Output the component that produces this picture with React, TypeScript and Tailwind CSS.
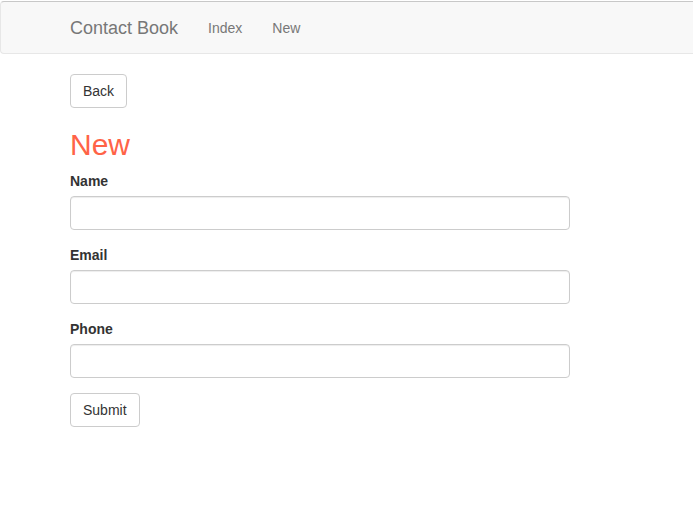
export default function App() {
  const fields = ["Name", "Email", "Phone"];
  return (
    <div className="min-h-[505px] overflow-hidden bg-white text-[14px] leading-[20px] text-[#333] [font-family:'Liberation_Sans',Arial,sans-serif]">
      <div className="h-px bg-white" />
      <nav className="mb-5 flex h-[53px] rounded-l-[4px] border border-r-0 border-[#e7e7e7] border-t-[#c8c8c8] bg-[#f8f8f8]">
        <div className="flex items-center pl-[54px]">
          <a className="px-[15px] text-[18px] leading-[20px] text-[#777]">Contact Book</a>
          <a className="px-[15px] text-[#777]">Index</a>
          <a className="px-[15px] text-[#777]">New</a>
        </div>
      </nav>
      <div className="px-[70px]">
        <button className="h-[34px] rounded-[4px] border border-[#ccc] bg-white px-3 text-[#333]">
          Back
        </button>
        <h1 className="mt-5 mb-[10px] text-[30px] leading-[33px] text-[#ff6347]">New</h1>
        <form className="w-[500px]">
          {fields.map((f) => (
            <div key={f} className="mb-[15px]">
              <label className="mb-[5px] block font-bold">{f}</label>
              <input
                type="text"
                className="block h-[34px] w-full rounded-[4px] border border-[#ccc] bg-white px-3 shadow-[inset_0_1px_1px_rgba(0,0,0,0.075)]"
              />
            </div>
          ))}
          <button
            type="button"
            className="h-[34px] rounded-[4px] border border-[#ccc] bg-white px-3 text-[#333]"
          >
            Submit
          </button>
        </form>
      </div>
    </div>
  );
}
